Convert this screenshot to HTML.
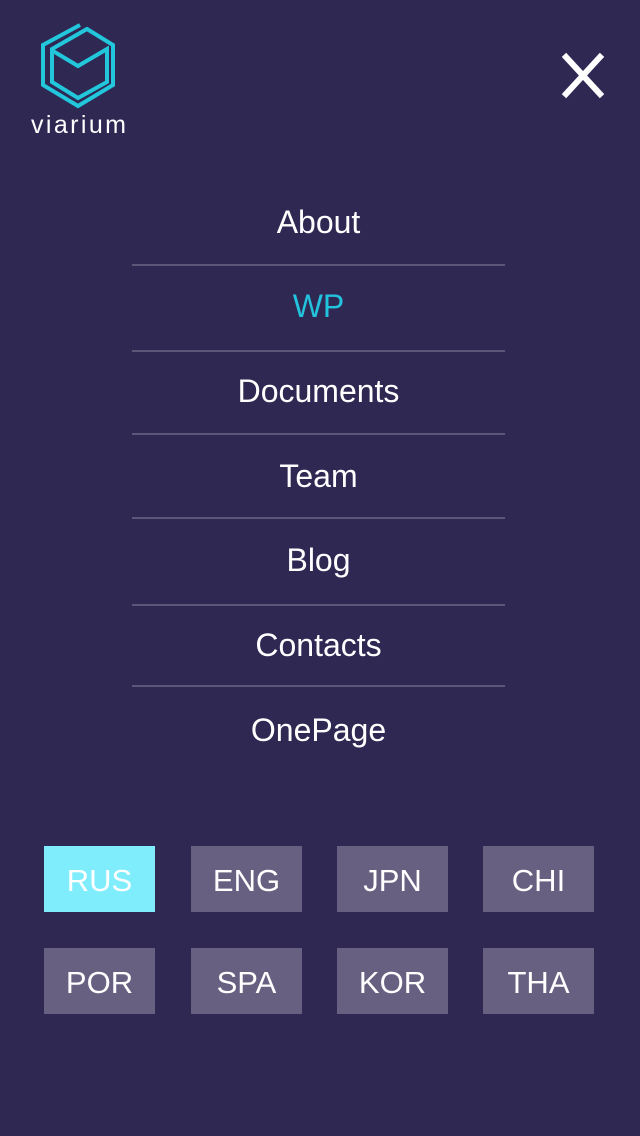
<!DOCTYPE html>
<html><head><meta charset="utf-8"><style>
html,body{margin:0;padding:0}
body{width:640px;height:1136px;background:#2e2853;position:relative;overflow:hidden;font-family:"Liberation Sans",sans-serif;color:#fff}
.item{position:absolute;left:132px;width:373px;text-align:center;font-size:32px;line-height:40px}
.hr{position:absolute;left:132px;width:373px;height:2px;background:#5c5679}
.b{position:absolute;width:111px;height:66px;background:#676080;text-align:center;line-height:70px;font-size:31px}
.logo{position:absolute;left:31px;top:111px;font-size:25px;letter-spacing:2.4px;color:#fff}
</style></head><body>
<svg style="position:absolute;left:0;top:0" width="640" height="1136">
<g fill="none" stroke="#22c7dc" stroke-width="4" stroke-linejoin="miter">
<polyline points="80,25 43,45 43,85 78,106 113,85 113,45 87,29 52,49 52,82 78,98 107,82 107,49 78,66 53,51"/>
</g>
<g stroke="#fff" stroke-width="6" stroke-linecap="square">
<line x1="566" y1="57" x2="600" y2="94"/><line x1="600" y1="57" x2="566" y2="94"/>
</g>
</svg>
<div class="logo">viarium</div>
<div class="item" style="top:202px">About</div>
<div class="hr" style="top:264px"></div>
<div class="item" style="top:286px;color:#22c3dc">WP</div>
<div class="hr" style="top:350px"></div>
<div class="item" style="top:371px">Documents</div>
<div class="hr" style="top:433px"></div>
<div class="item" style="top:456px">Team</div>
<div class="hr" style="top:517px"></div>
<div class="item" style="top:540px">Blog</div>
<div class="hr" style="top:604px"></div>
<div class="item" style="top:625px">Contacts</div>
<div class="hr" style="top:685px"></div>
<div class="item" style="top:710px">OnePage</div>
<div class="b" style="left:44px;top:846px;background:#80edfc">RUS</div>
<div class="b" style="left:191px;top:846px">ENG</div>
<div class="b" style="left:337px;top:846px">JPN</div>
<div class="b" style="left:483px;top:846px">CHI</div>
<div class="b" style="left:44px;top:948px">POR</div>
<div class="b" style="left:191px;top:948px">SPA</div>
<div class="b" style="left:337px;top:948px">KOR</div>
<div class="b" style="left:483px;top:948px">THA</div>
</body></html>
